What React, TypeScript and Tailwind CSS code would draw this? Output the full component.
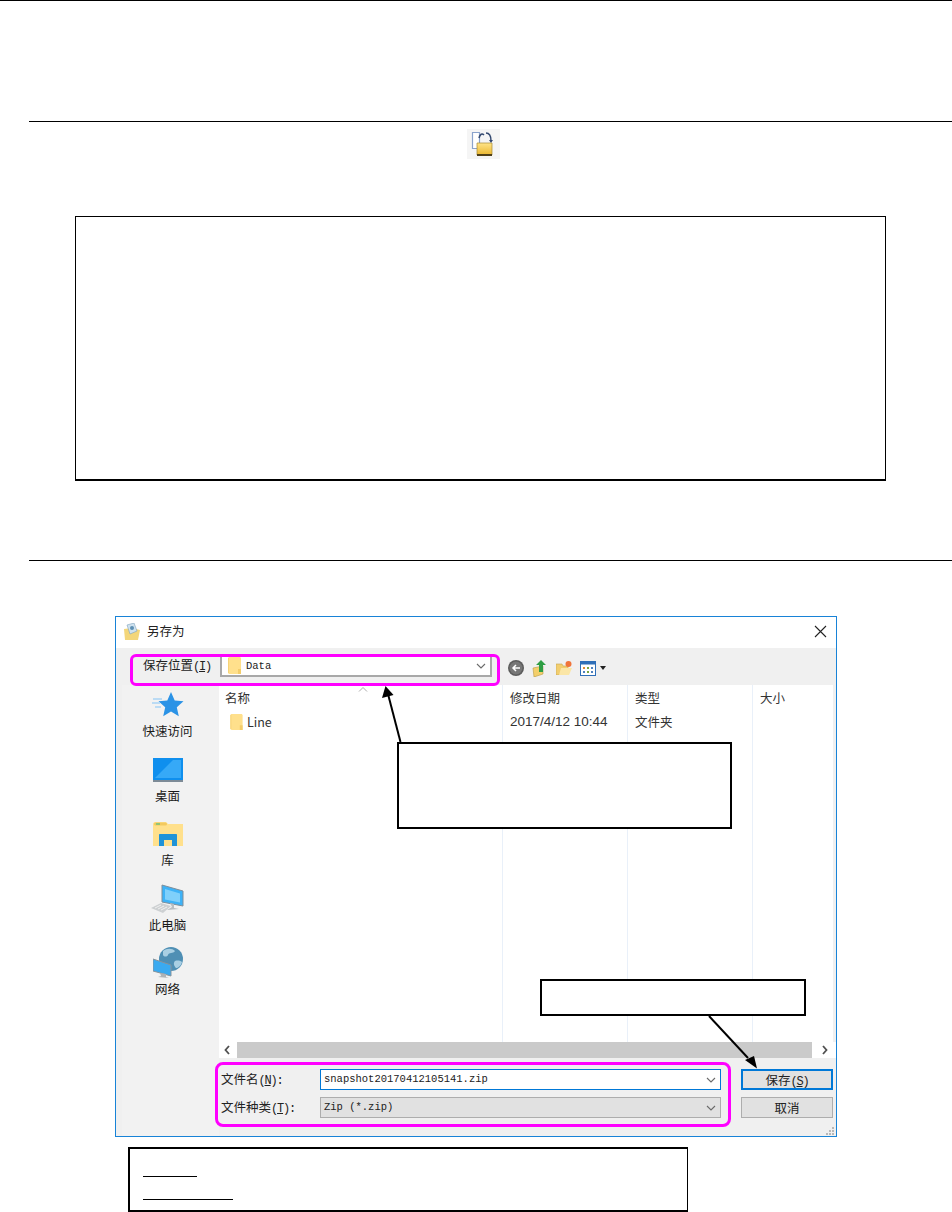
import React from "react";

const cjk = "font-['Noto_Sans_CJK_SC','Noto_Sans',sans-serif]";
const mono = "font-['Liberation_Mono','Noto_Sans_CJK_SC',monospace]";

function Chevron() {
  return (
    <svg width="10" height="6" viewBox="0 0 10 6" className="shrink-0">
      <path d="M1 1l4 4 4-4" fill="none" stroke="#6b6b6b" strokeWidth="1.1" />
    </svg>
  );
}

function FolderFlat({ w = 13, h = 17 }: { w?: number; h?: number }) {
  return (
    <svg width={w} height={h} viewBox="0 0 13 17" className="shrink-0">
      <path d="M0 1.5C0 .7.7 0 1.5 0H11.5C12.3 0 13 .7 13 1.5V17H1.5C.7 17 0 16.3 0 15.5Z" fill="#ffe08c" />
      <path d="M10 12h3v5h-3z" fill="#f4cd6a" />
      <path d="M.5 1v15" stroke="#f6d377" strokeWidth="1" />
    </svg>
  );
}

function LockIcon() {
  return (
    <div className="ml-[467px] w-[33px] h-[30px] mt-[7px] bg-[#f5f5f5]">
      <svg width="33" height="30" viewBox="0 0 33 30">
        <defs>
          <linearGradient id="lockBody" x1="0" y1="0" x2="0" y2="1">
            <stop offset="0" stopColor="#ffe488" />
            <stop offset="1" stopColor="#eab62f" />
          </linearGradient>
        </defs>
        <path d="M5.500 3.500h7v16h-7z" fill="#fff" stroke="#8aa3cc" strokeWidth="1.200" />
        <path d="M12 9c1-4 3-5 5-3M19 4c3 0 5 3 5 8" fill="none" stroke="#33486f" strokeWidth="1.500" />
        <path d="M22 11l2 3 2-3z" fill="#33486f" />
        <path d="M10 14h15v12H10z" fill="url(#lockBody)" stroke="#a88a34" strokeWidth="0.700" />
        <path d="M10 25h15v2H10z" fill="#4f3f18" />
      </svg>
    </div>
  );
}

function StarIcon() {
  return (
    <svg width="32" height="28" viewBox="0 0 32 28">
      <path d="M19 1l3.700 8.400 8.800.8-6.700 6 2 9-7.800-4.700-7.800 4.700 2-9-6.700-6 8.800-.8z" fill="#2b93e6" />
      <path d="M1 8h9M0 12h8M3 16h6" stroke="#a9d4f5" strokeWidth="1.300" />
    </svg>
  );
}

function DesktopIcon() {
  return (
    <svg width="30" height="24" viewBox="0 0 30 24">
      <rect x="0" y="0" width="30" height="22" fill="#0f8fee" />
      <path d="M2 20L20 2h8v18z" fill="#36a9f7" />
      <rect x="0" y="22" width="30" height="2" fill="#7d8b97" />
    </svg>
  );
}

function LibraryIcon() {
  return (
    <svg width="30" height="24" viewBox="0 0 30 24">
      <path d="M0 2c0-1 1-2 2-2h11l2 2h15v22H0z" fill="#ffe08c" />
      <rect x="1" y="0.500" width="13" height="3" rx="1.500" fill="#f3c95f" />
      <rect x="3" y="1.200" width="4" height="1.600" fill="#7cc27e" />
      <path d="M6 24V13c0-.6.400-1 1-1h16c.6 0 1 .4 1 1v11h-5v-6h-8v6z" fill="#1f93d8" />
    </svg>
  );
}

function PcIcon() {
  return (
    <svg width="34" height="30" viewBox="0 0 34 30">
      <path d="M11 1l21 6v15l-21-4z" fill="#3db2f7" stroke="#7e8f9c" strokeWidth="1" />
      <path d="M14 5l15 4.500v9l-15-3z" fill="#7fd0fb" />
      <path d="M19 19l4 1v4l5 1-12 1 5-3z" fill="#b9bec2" />
      <path d="M0 24l10-5 10 3-8 7z" fill="#cdd0d2" />
      <path d="M4 24l6-3M7 25l6-3M10 26l6-3" stroke="#f0f0f0" strokeWidth="1" />
    </svg>
  );
}

function NetworkIcon() {
  return (
    <svg width="30" height="32" viewBox="0 0 30 32">
      <circle cx="18" cy="12" r="12" fill="#4f8fb4" />
      <path d="M10 4c4-3 9-3 12 0-2 3-6 1-7 4-1 2-4 2-5 0zM22 14c3-1 6 0 7 1-1 4-4 6-6 6-2-2-3-5-1-7z" fill="#a9cfe3" />
      <path d="M0 12l18 6v11L0 24z" fill="#3aaaf0" stroke="#87939b" strokeWidth="1" />
      <path d="M7 26l6 1v3l3 1-11-1 3-1z" fill="#aeb3b6" />
    </svg>
  );
}

function SidebarItem({ icon, label }: { icon: React.ReactNode; label: string }) {
  return (
    <div className="h-[64.5px] flex flex-col items-center">
      <div className="h-[32px] flex items-center justify-center">{icon}</div>
      <div className="h-[20px] leading-[20px] text-[12.5px] text-[#1a1a1a] whitespace-nowrap">{label}</div>
    </div>
  );
}

function Hotkey({ k, colon }: { k: string; colon?: boolean }) {
  return (
    <span className={`text-[12px] tracking-[-1.2px] ${mono}`}>
      (<u>{k}</u>){colon ? ":" : ""}
    </span>
  );
}

function ToolbarIcons() {
  return (
    <div className="flex items-center ml-[8px] gap-[8px] pt-[3px]">
      <svg width="16" height="16" viewBox="0 0 16 16">
        <circle cx="8" cy="8" r="8" fill="#5c5c5c" />
        <circle cx="8" cy="8" r="6.500" fill="#777" />
        <path d="M12 8H5M8 5L5 8l3 3" fill="none" stroke="#fff" strokeWidth="1.500" />
      </svg>
      <svg width="16" height="17" viewBox="0 0 16 17">
        <path d="M1 8l10-2v8l-9 3z" fill="#f3cf6b" stroke="#b79a45" strokeWidth="0.600" />
        <path d="M9 0l5 5h-3v7H7V5H4z" fill="#2f9e44" />
      </svg>
      <svg width="16" height="14" viewBox="0 0 16 14">
        <path d="M0 3h6l1 2h5v9H0z" fill="#f2ce6f" stroke="#c4a650" strokeWidth="0.600" />
        <path d="M3 14l2-7h11l-3 7z" fill="#fbe6a6" />
        <circle cx="12.500" cy="3" r="3" fill="#f0743a" />
      </svg>
      <div className="flex items-center gap-[4px]">
        <svg width="16" height="15" viewBox="0 0 16 15">
          <rect x="0.500" y="0.500" width="15" height="14" fill="#fff" stroke="#2f6fb8" />
          <rect x="0.500" y="0.500" width="15" height="3" fill="#2f6fb8" />
          <path d="M3 6h2v2H3z" fill="#e0893b" />
          <path d="M7 6h2v2H7zM7 10h2v2H7z" fill="#7aa63f" />
          <path d="M11 6h2v2h-2zM3 10h2v2H3zM11 10h2v2h-2z" fill="#4f81bd" />
        </svg>
        <svg width="6" height="4" viewBox="0 0 6 4">
          <path d="M0 0h6L3 4z" fill="#222" />
        </svg>
      </div>
    </div>
  );
}

function SaveDialog() {
  return (
    <div className={`relative mt-[55px] ml-[115px] w-[722px] h-[521px] border border-[#1883d7] bg-white flex flex-col ${cjk}`}>
      <div className="h-[31px] flex items-center pl-[8px] pb-[2px] shrink-0">
        <svg width="16" height="17" viewBox="0 0 16 17">
          <path d="M0 6l8-1 8 2-2 10H1z" fill="#f3d67a" />
          <path d="M3 2l7-2 3 8-7 3z" fill="#cfe2ef" stroke="#7fa2bc" strokeWidth="0.600" />
          <circle cx="8" cy="5" r="2" fill="#5d8fb3" />
        </svg>
        <span className="ml-[7px] text-[12.5px] text-[#222]">另存为</span>
        <svg width="13" height="13" viewBox="0 0 13 13" className="ml-auto mr-[9px]">
          <path d="M1 1l11 11M12 1L1 12" stroke="#222" strokeWidth="1.100" />
        </svg>
      </div>

      <div className="h-[37px] bg-[#f0f0f0] flex items-center shrink-0">
        <span className="ml-[27px] w-[77px] pb-[2px] text-[12.5px] text-[#222] whitespace-nowrap">
          保存位置<Hotkey k="I" />
        </span>
        <div className="w-[272px] h-[23px] -mt-[2px] border-2 border-[#a8a8a8] bg-white flex items-center pl-[6px] pr-[4px]">
          <FolderFlat />
          <span className={`ml-[5px] pt-[3px] text-[10.5px] text-[#222] ${mono}`}>Data</span>
          <span className="ml-auto">
            <Chevron />
          </span>
        </div>
        <div className="ml-[8px]">
          <ToolbarIcons />
        </div>
      </div>

      <div className="flex flex-1 min-h-0">
        <div className="w-[6px] bg-[#f0f0f0] shrink-0" />
        <div className="w-[97px] bg-[#f2f2f2] shrink-0 pt-[4px] pr-[6px]">
          <SidebarItem icon={<StarIcon />} label="快速访问" />
          <SidebarItem icon={<DesktopIcon />} label="桌面" />
          <SidebarItem icon={<LibraryIcon />} label="库" />
          <SidebarItem icon={<PcIcon />} label="此电脑" />
          <SidebarItem icon={<NetworkIcon />} label="网络" />
        </div>

        <div className="flex-1 min-w-0 flex flex-col">
          <div className="flex-1 min-h-0 flex bg-[#f0f0f0] pr-[3px]">
            <div className="flex-1 flex bg-white">
              <div className="w-[284px] border-r border-[#e9f0f9]">
                <div className="h-[26px] pl-[6px] pt-[3px] leading-[20px] text-[12.5px] text-[#333]">名称</div>
                <div className="flex items-center h-[22px] pl-[11px]">
                  <FolderFlat w={13} h={16} />
                  <span className="ml-[4px] text-[12.5px] text-[#333]">Line</span>
                </div>
              </div>
              <div className="w-[125px] border-r border-[#e9f0f9]">
                <div className="h-[26px] pl-[7px] pt-[3px] leading-[20px] text-[12.5px] text-[#333]">修改日期</div>
                <div className="h-[22px] pl-[7px] leading-[22px] text-[13.5px] text-[#333] whitespace-nowrap font-['Liberation_Sans',sans-serif]">
                  2017/4/12 10:44
                </div>
              </div>
              <div className="w-[125px] border-r border-[#e9f0f9]">
                <div className="h-[26px] pl-[7px] pt-[3px] leading-[20px] text-[12.5px] text-[#333]">类型</div>
                <div className="h-[22px] pl-[7px] leading-[22px] text-[12.5px] text-[#333]">文件夹</div>
              </div>
              <div className="flex-1 pl-[7px] pt-[3px] leading-[20px] text-[12.5px] text-[#333]">大小</div>
            </div>
          </div>
          <div className="h-[16px] flex items-center shrink-0">
            <svg width="18" height="16" viewBox="0 0 18 16" className="shrink-0">
              <path d="M10 4L6.500 8l3.500 4" fill="none" stroke="#505050" strokeWidth="1.800" />
            </svg>
            <div className="flex-1 h-full bg-[#cacaca]" />
            <svg width="24" height="16" viewBox="0 0 24 16" className="shrink-0">
              <path d="M11 4l3.500 4-3.500 4" fill="none" stroke="#505050" strokeWidth="1.800" />
            </svg>
          </div>
          <div className="h-[78px] bg-[#f0f0f0] pl-[2px] shrink-0">
            <div className="flex items-center pt-[11px]">
              <span className="w-[99px] text-[12.5px] text-[#222] whitespace-nowrap">
                文件名<Hotkey k="N" colon />
              </span>
              <div className="w-[401px] h-[21px] border border-[#0078d7] bg-white flex items-center pl-[3px] pr-[4px]">
                <span className={`text-[10.5px] text-[#222] ${mono}`}>snapshot20170412105141.zip</span>
                <span className="ml-auto">
                  <Chevron />
                </span>
              </div>
              <div className="ml-[20px] w-[92px] h-[21px] border-2 border-[#0078d7] bg-[#e1e1e1] text-center text-[12.5px] leading-[17px] text-[#222]">
                保存<Hotkey k="S" />
              </div>
            </div>
            <div className="flex items-center pt-[7px]">
              <span className="w-[99px] text-[12.5px] text-[#222] whitespace-nowrap">
                文件种类<Hotkey k="T" colon />
              </span>
              <div className="w-[401px] h-[21px] border border-[#adadad] bg-[#e1e1e1] flex items-center pl-[3px] pr-[4px]">
                <span className={`text-[10.5px] text-[#222] ${mono}`}>Zip (*.zip)</span>
                <span className="ml-auto">
                  <Chevron />
                </span>
              </div>
              <div className="ml-[20px] w-[92px] h-[21px] border border-[#adadad] bg-[#e1e1e1] text-center text-[12.5px] leading-[19px] text-[#222]">
                取消
              </div>
            </div>
          </div>
        </div>
      </div>

      {/* resize grip */}
      <svg width="9" height="9" viewBox="0 0 9 9" className="absolute right-[2px] bottom-[1px]">
        <path d="M7 1h2v2H7zM4 4h2v2H4zM7 4h2v2H7zM1 7h2v2H1zM4 7h2v2H4zM7 7h2v2H7z" fill="#b8b8b8" />
      </svg>

      {/* sort caret */}
      <svg width="10" height="5" viewBox="0 0 10 5" className="absolute left-[242px] top-[70px]">
        <path d="M1 4.500l4-4 4 4" fill="none" stroke="#aaa" strokeWidth="1" />
      </svg>
    </div>
  );
}

export default function App() {
  return (
    <div className="relative w-[952px] h-[1212px] bg-white overflow-hidden">
      <div className="h-px bg-black" />
      <div className="mt-[120px] ml-[29px] h-px bg-black" />
      <LockIcon />
      <div className="mt-[57px] ml-[75px] w-[811px] h-[265px] border border-black border-b-2" />
      <div className="mt-[79px] ml-[29px] h-px bg-black" />

      <SaveDialog />

      <div className="mt-[10px] ml-[128px] w-[560px] h-[65px] border-2 border-black border-r pt-[27px] pl-[13px]">
        <div className="w-[54px] h-px bg-black" />
        <div className="mt-[22px] w-[90px] h-px bg-black" />
      </div>

      {/* magenta highlights */}
      <div className="absolute left-[130px] top-[654px] w-[370px] h-[32px] border-[3px] border-[#ff00ff] rounded-[6px]" />
      <div className="absolute left-[215px] top-[1062px] w-[516px] h-[65px] border-[3px] border-[#ff00ff] rounded-[8px]" />

      {/* callouts */}
      <div className="absolute left-[397px] top-[742px] w-[335px] h-[87px] border-2 border-black bg-white" />
      <div className="absolute left-[540px] top-[979px] w-[266px] h-[37px] border-2 border-black bg-white" />

      <svg width="30" height="60" viewBox="375 684 30 60" className="absolute left-[375px] top-[684px]">
        <path d="M400.500 742L388 694" stroke="#000" strokeWidth="2" />
        <path d="M385.500 686L393.500 695 382 698z" fill="#000" />
      </svg>
      <svg width="60" height="60" viewBox="705 1014 60 60" className="absolute left-[705px] top-[1014px]">
        <path d="M709 1016L748 1058" stroke="#000" strokeWidth="2" />
        <path d="M757 1068.500L745 1060 754 1056z" fill="#000" />
      </svg>
    </div>
  );
}
